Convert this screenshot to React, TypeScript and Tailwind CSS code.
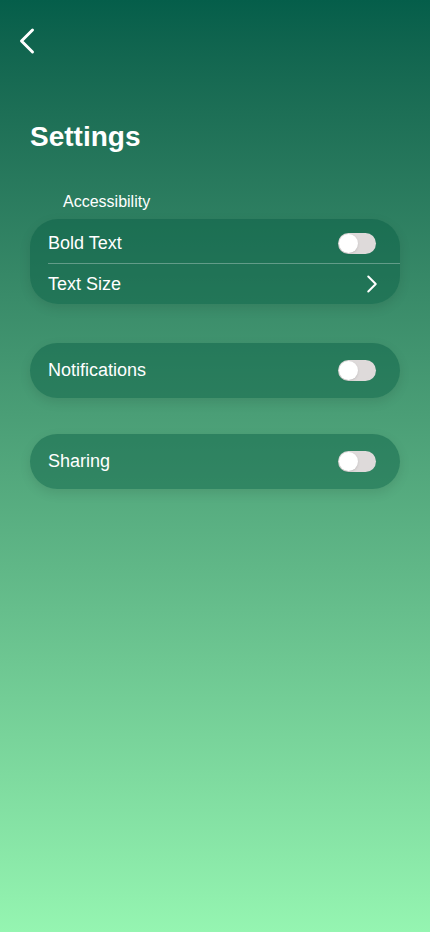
import { ChevronLeft, ChevronRight } from "lucide-react";

const Toggle = () => (
  <div className="w-[38px] h-[21px] rounded-full bg-[#dedada] flex items-center px-[1px]">
    <div className="w-[19px] h-[19px] rounded-full bg-white shadow-sm" />
  </div>
);

const Card = ({ children }: { children: React.ReactNode }) => (
  <div className="rounded-[28px] bg-[#065a42]/45 shadow-[0_4px_12px_rgba(0,0,0,0.1)]">
    {children}
  </div>
);

const App = () => {
  return (
    <div
      className="w-[430px] h-[932px] bg-gradient-to-b from-[#055e4a] to-[#95f5b1] text-white"
      style={{ fontFamily: '"Liberation Sans", Arial, sans-serif' }}
    >
      <div className="flex pt-[19px] pl-[5px]">
        <ChevronLeft size={44} strokeWidth={1.6} />
      </div>
      <h1 className="mt-[60px] ml-[30px] text-[28px] font-bold leading-none">Settings</h1>
      <div className="mt-[43px] ml-[63px] text-[16px] leading-none">Accessibility</div>
      <div className="mx-[30px] mt-[9px] flex flex-col">
        <Card>
          <div className="h-[44px] pl-[18px] pr-[24px] pt-[4px] flex items-center justify-between">
            <span className="text-[18px]">Bold Text</span>
            <Toggle />
          </div>
          <div className="ml-[18px] h-px bg-white/30" />
          <div className="h-[40px] pl-[18px] pr-[13px] flex items-center justify-between">
            <span className="text-[18px]">Text Size</span>
            <ChevronRight size={30} strokeWidth={1.6} />
          </div>
        </Card>
        <div className="mt-[39px]">
          <Card>
            <div className="h-[55px] pl-[18px] pr-[24px] flex items-center justify-between">
              <span className="text-[18px]">Notifications</span>
              <Toggle />
            </div>
          </Card>
        </div>
        <div className="mt-[36px]">
          <Card>
            <div className="h-[55px] pl-[18px] pr-[24px] flex items-center justify-between">
              <span className="text-[18px]">Sharing</span>
              <Toggle />
            </div>
          </Card>
        </div>
      </div>
    </div>
  );
};

export default App;
